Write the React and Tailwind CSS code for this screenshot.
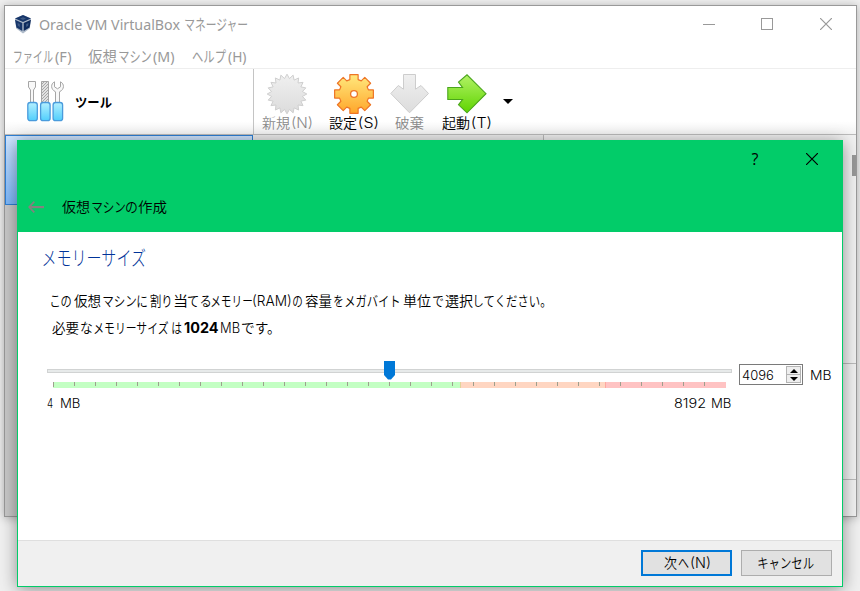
import { useLayoutEffect, useRef } from "react";

// One run of text, stretched so that its ink fills the given width.
function Run({ text, width, gap, bold }) {
  const ref = useRef(null);
  useLayoutEffect(() => {
    const el = ref.current;
    const cs = getComputedStyle(el);
    const ctx = document.createElement("canvas").getContext("2d");
    ctx.font = `${cs.fontWeight} ${cs.fontSize} ${cs.fontFamily}`;
    const m = ctx.measureText(text);
    const ink = m.actualBoundingBoxRight + m.actualBoundingBoxLeft;
    const s = width / ink;
    el.style.transform = `translateX(${m.actualBoundingBoxLeft * s}px) scaleX(${s})`;
  }, [text, width]);
  return (
    <span className="block shrink-0 whitespace-pre" style={{ width, marginLeft: gap }}>
      <span ref={ref} className={bold ? "inline-block origin-left font-bold" : "inline-block origin-left"}>
        {text}
      </span>
    </span>
  );
}

// A line of runs: [text, start, end, bold?], measured from the line's left edge.
function Line({ runs, className = "" }) {
  return (
    <div className={`flex ${className}`}>
      {runs.map(([text, a, b, bold], i) => (
        <Run key={i} text={text} width={b - a} gap={a - (i ? runs[i - 1][2] : 0)} bold={bold} />
      ))}
    </div>
  );
}

const UI = "font-['Inter','Noto_Sans_CJK_JP',sans-serif] font-[350]";
const TITLE = "font-['Noto_Sans','Noto_Sans_CJK_JP',sans-serif] font-normal";

function Logo() {
  return (
    <svg className="block h-5 w-[18px]" viewBox="0 0 18 20">
      <path d="M1 4.500 9 1l8 3.500-1.200 10L9 19.500l-6.800-5z" fill="#aebac9" />
      <path d="M1 4.500 9 1l8 3.500L9 8z" fill="#17366a" />
      <path d="M1 5.700 8.300 9v8L2.400 13.600z" fill="#17366a" />
      <path d="M17 5.700 9.700 9v8l5.900-3.400z" fill="#0d2a5c" />
      <path d="m6 4.500 3-1.300 3 1.300L9 6zM3.500 9l2.300 1v3l-2-1.200zM14.500 9l-2.300 1v3l2-1.200z" fill="#3f5b85" />
    </svg>
  );
}

function ToolsIcon() {
  return (
    <svg className="block h-[41px] w-[37px]" viewBox="0 0 37 41">
      <defs>
        <linearGradient id="handle" x2="0" y2="1">
          <stop stopColor="#b5f0ff" />
          <stop offset="1" stopColor="#50cefc" />
        </linearGradient>
        <pattern id="file" width="3" height="3" patternUnits="userSpaceOnUse">
          <rect width="3" height="3" fill="#e2e2e2" />
          <path d="M0 3 3 0" stroke="#999" strokeWidth=".8" />
        </pattern>
      </defs>
      <path d="M1.500.5h7V6L6.500 9v14h-3V9L1.500 6z" fill="#f8f8f8" stroke="#a5a5a5" />
      <path d="M14.500.5h7v22h-7z" fill="url(#file)" stroke="#a5a5a5" />
      <path d="M27.500.8v5l3 2 3-2v-5c4 2 4.200 7.500-1 10V23h-4V10.800c-5-2.500-5-8-1-10z" fill="#f8f8f8" stroke="#a5a5a5" />
      {[0.8, 13.6, 26.1].map((x) => (
        <rect key={x} x={x} y="21.500" width="9.500" height="18.200" rx="2.500" fill="url(#handle)" stroke="#4a9bdc" strokeWidth="1.300" />
      ))}
    </svg>
  );
}

const STAR = Array.from({ length: 40 }, (_, i) => {
  const r = i % 2 ? 15.6 : 19.8;
  const a = (i * Math.PI) / 20 - Math.PI / 2;
  return `${(20 + r * Math.cos(a)).toFixed(2)},${(20 + r * Math.sin(a)).toFixed(2)}`;
}).join(" ");

const GEAR = Array.from({ length: 8 }, (_, i) => {
  const pt = (deg, r) => {
    const a = ((i * 45 + deg - 90) * Math.PI) / 180;
    return `${(20 + r * Math.cos(a)).toFixed(2)},${(20 + r * Math.sin(a)).toFixed(2)}`;
  };
  return [pt(-16, 15), pt(-12, 19.8), pt(12, 19.8), pt(16, 15)].join(" ");
}).join(" ");

function ActionIcon({ kind }) {
  return (
    <svg className="block h-10 w-10" viewBox="0 0 40 40">
      <defs>
        <linearGradient id="grey" x2="0" y2="1">
          <stop stopColor="#f0f0f0" />
          <stop offset="1" stopColor="#dcdcdc" />
        </linearGradient>
        <linearGradient id="orange" x2="0" y2="1">
          <stop stopColor="#ffe97e" />
          <stop offset="1" stopColor="#ffa62a" />
        </linearGradient>
        <linearGradient id="green" x2="0" y2="1">
          <stop stopColor="#b2f266" />
          <stop offset="1" stopColor="#5fd400" />
        </linearGradient>
      </defs>
      {kind === "new" && <polygon points={STAR} fill="url(#grey)" stroke="#cfcfcf" />}
      {kind === "settings" && (
        <>
          <polygon points={GEAR} fill="url(#orange)" stroke="#ee7526" strokeWidth="1.200" strokeLinejoin="round" />
          <circle cx="20" cy="20" r="3.400" fill="#fff" stroke="#ee7526" strokeWidth="1.300" />
        </>
      )}
      {kind === "discard" && (
        <path d="M13.500.5h12v14.700l5.500-3.700 7.500 8L19.500 38.800.8 19.500l7.500-8 5.200 3.700z" fill="url(#grey)" stroke="#cdcdcd" />
      )}
      {kind === "start" && (
        <path d="M.8 13.500H15.500l-4-5.300L20 .8l19 18.900L20 38.800l-8.500-8 4-5.300H.8z" fill="url(#green)" stroke="#4aa51c" strokeWidth="1.100" />
      )}
    </svg>
  );
}

function Cross({ className }) {
  return (
    <svg className={`block size-3 ${className}`} viewBox="0 0 12 12">
      <path d="m0 0 12 12M12 0 0 12" fill="none" stroke="currentColor" strokeWidth="1.200" />
    </svg>
  );
}

function Manager() {
  return (
    <div className="absolute left-[4px] top-[5px] flex h-[512px] w-[853px] flex-col border border-[#999] bg-white shadow-[0_1px_9px_rgba(0,0,0,0.28)]">
      <div className={`flex h-[36px] shrink-0 items-center pl-[9px] text-[#999] ${TITLE}`}>
        <Logo />
        <Line className="w-[671px] pl-[7px] text-[15px] leading-[22px]" runs={[["Oracle VM VirtualBox", 0, 141], ["マネージャー", 146, 209]]} />
        <div className="h-px w-3 bg-[#999]" />
        <div className="ml-[46px] size-3 border border-[#999]" />
        <Cross className="ml-[47px]" />
      </div>
      <div className={`flex h-[26px] shrink-0 text-[#999] ${TITLE}`}>
        <Line
          className="text-[15px] leading-[28px]"
          runs={[
            ["ファイル", 9, 48], ["(F)", 50, 66],
            ["仮想", 83, 112], ["マシン", 114, 146], ["(M)", 148, 169],
            ["ヘルプ", 187, 221], ["(H)", 223, 241],
          ]}
        />
      </div>
      <div className="flex h-[67px] shrink-0 border-y border-t-[#eee] border-b-[#bcbcbc] bg-gradient-to-b from-white from-80% to-[#f4f4f4]">
        <div className="flex w-[249px] shrink-0 border-r border-[#c4c4c4] pl-[22px] pt-[12px]">
          <ToolsIcon />
          <Line className={`pl-[11px] pt-[10px] text-[13px] leading-[22px] text-black ${UI}`} runs={[["ツール", 0, 37, true]]} />
        </div>
        <div className={`flex pt-[5px] text-[14px] leading-[18px] ${UI}`}>
          <div className="w-[67px] pl-2 text-[#8b8b8b]">
            <div className="pl-[5px]"><ActionIcon kind="new" /></div>
            <Line runs={[["新規", 0, 28], ["(N)", 30, 50]]} />
          </div>
          <div className="w-[60px] pl-2 text-black">
            <div className="pl-[5px]"><ActionIcon kind="settings" /></div>
            <Line runs={[["設定", 0, 28], ["(S)", 30, 49]]} />
          </div>
          <div className="w-[57px] pl-[9px] text-[#8b8b8b]">
            <ActionIcon kind="discard" />
            <Line runs={[["破棄", 5, 34]]} />
          </div>
          <div className="w-[56px] pl-[4px] text-black">
            <div className="pl-[5px]"><ActionIcon kind="start" /></div>
            <Line runs={[["起動", 0, 28], ["(T)", 30, 49]]} />
          </div>
          <div className="ml-[9px] mt-[25px] h-0 border-x-[5px] border-t-[5px] border-x-transparent border-t-black" />
        </div>
      </div>
      <div className="flex min-h-0 flex-1">
        <div className="w-[248px] bg-[#c9c9c9]">
          <div className="h-[70px] border border-[#2e80d6] bg-gradient-to-b from-[#d0e6ff] to-[#7db8fb]" />
        </div>
        <div className="w-[291px] border-r border-[#bbb] bg-[#eee]" />
        <div className="flex flex-1 flex-col bg-[#f2f2f2]">
          <div className="mt-5 h-[21px] w-[4px] self-end bg-[#999]" />
          <div className="h-[188px] border-b border-[#bcbcbc]" />
          <div className="h-[116px] border-b border-[#bcbcbc]" />
        </div>
      </div>
    </div>
  );
}

const TICKS = Array.from({ length: 32 }, (_, i) => i);

function Slider() {
  return (
    <div className="relative w-[685px]">
      <div className="h-[4px] border border-[#d1d3d3] bg-[#e7eaea]" />
      <svg className="absolute left-[337px] top-[-8px] h-[19px] w-[11px]" viewBox="0 0 11 19">
        <path d="M0 0h11v14l-4 4.500H4L0 14z" fill="#0078d7" />
      </svg>
      <div className="relative ml-[6px] mt-[9px] flex h-[6px] w-[673px]">
        <div className="w-[407px] bg-[#c3ffc3]" />
        <div className="w-[145px] border-l border-[#e0d49a] bg-[#ffd6c2]" />
        <div className="flex-1 border-l border-[#ffa8a0] bg-[#ffc3c3]" />
        <div className="absolute left-0 top-0 flex gap-5">
          {TICKS.map((i) => (
            <i key={i} className={i ? "block h-[4px] w-px bg-[#9d9f8d]" : "block h-[5px] w-px bg-[#9d9f8d]"} />
          ))}
        </div>
      </div>
      <Line className="pt-[5px] text-[13px] leading-[21px]" runs={[["4", 0, 6], ["MB", 14, 33], ["8192", 627, 658], ["MB", 665, 684]]} />
    </div>
  );
}

function Wizard() {
  return (
    <div className={`absolute left-[17px] top-[140px] flex h-[447px] w-[826px] flex-col border border-t-0 border-[#02cc69] bg-white text-black shadow-[0_2px_16px_rgba(0,0,0,0.42)] ${UI}`}>
      <div className="h-[92px] shrink-0 bg-[#02cc69]">
        <div className="flex h-[46px] items-start pt-[13px]">
          <span className="ml-[732px] h-3 w-[10px] text-center font-['Open_Sans',sans-serif] text-[16px] font-normal leading-[12px]">?</span>
          <Cross className="ml-[46px]" />
        </div>
        <div className="flex pl-[10px] pt-[9px]">
          <svg className="mt-[6px] block h-[12px] w-4" viewBox="0 0 16 12">
            <path d="M1 5h15v2.200H1z" fill="#84817f" />
            <path d="M6.300.7 1.200 6l5.100 5.300" fill="none" stroke="#84817f" strokeWidth="1.700" />
          </svg>
          <Line className="pl-[18px] text-[14px] leading-[23px]" runs={[["仮想", 0, 28], ["マシン", 30, 63], ["の", 64, 75], ["作成", 76, 105]]} />
        </div>
      </div>
      <div className="h-[308px] shrink-0 pl-[24px] pt-[11px]">
        <Line className="font-['Noto_Sans_CJK_JP',sans-serif] text-[20px] font-light leading-[30px] text-[#003399]" runs={[["メモリーサイズ", 1, 104]]} />
        <Line
          className="pt-[14px] text-[14px] leading-[27px]"
          runs={[
            ["この", 9, 29], ["仮想", 32, 59], ["マシン", 61, 94], ["に", 95, 105], ["割り", 108, 129],
            ["当", 132, 145], ["てる", 146, 168], ["メモリー", 169, 210], ["(RAM)", 211, 249], ["の", 251, 260],
            ["容量", 263, 290], ["を", 292, 301], ["メガバイト", 303, 357], ["単位", 361, 389], ["で", 391, 401],
            ["選択", 403, 431], ["してください。", 433, 503],
          ]}
        />
        <Line
          className="text-[14px] leading-[27px]"
          runs={[
            ["必要", 10, 37], ["な", 39, 50], ["メモリーサイズ", 52, 127], ["は", 130, 140],
            ["1024", 142, 176, true], ["MB", 179, 198], ["です。", 200, 230],
          ]}
        />
        <div className="flex pl-[5px] pt-[23px]">
          <div className="pt-[5px]"><Slider /></div>
          <div className="ml-[7px] flex h-[21px] w-[64px] border border-[#7a7a7a] p-px">
            <Line className="w-[46px] text-[13px] leading-[19px]" runs={[["4096", 1, 32]]} />
            <div className="flex w-[15px] flex-col gap-px bg-[#b4b4b4] p-px">
              <div className="flex flex-1 items-center justify-center bg-[#eee]">
                <i className="block border-x-4 border-b-4 border-x-transparent border-b-black" />
              </div>
              <div className="flex flex-1 items-center justify-center bg-[#eee]">
                <i className="block border-x-4 border-t-4 border-x-transparent border-t-black" />
              </div>
            </div>
          </div>
          <Line className="text-[13px] leading-[23px]" runs={[["MB", 8, 28]]} />
        </div>
      </div>
      <div className="flex flex-1 gap-[9px] border-t border-[#dfdfdf] bg-[#f0f0f0] pl-[623px] pt-[9px] text-[14px]">
        <div className="h-[26px] w-[91px] border-2 border-[#0078d7] bg-[#e1e1e1]">
          <Line className="leading-[22px]" runs={[["次", 21, 34], ["へ", 35, 46], ["(N)", 48, 67]]} />
        </div>
        <div className="h-[26px] w-[91px] border border-[#adadad] bg-[#e1e1e1]">
          <Line className="leading-[24px]" runs={[["キャンセル", 16, 72]]} />
        </div>
      </div>
    </div>
  );
}

export default function App() {
  return (
    <div className="relative h-[591px] w-[860px] overflow-hidden bg-[#f0f0f0]">
      <Manager />
      <Wizard />
    </div>
  );
}
